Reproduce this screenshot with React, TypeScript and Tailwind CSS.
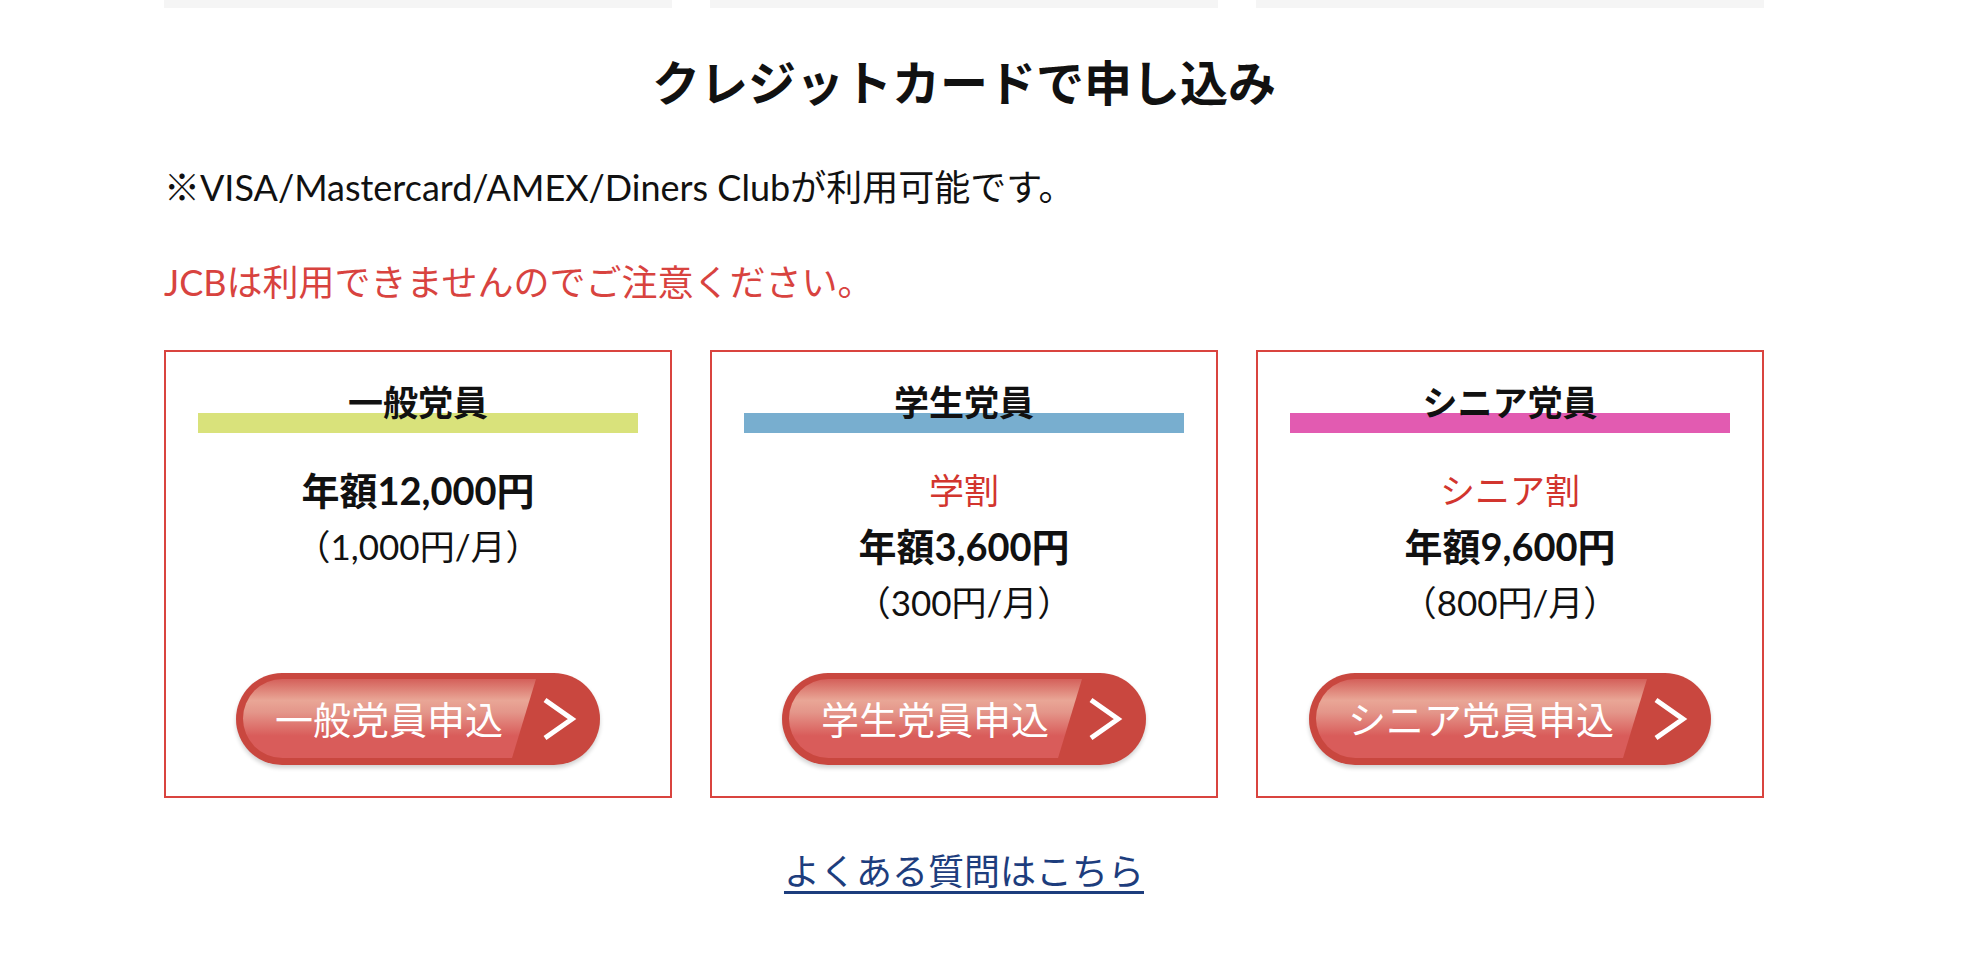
import React from "react";

type Plan = {
  title: string;
  bar: string;
  discount?: string;
  price: string;
  monthly: string;
  button: string;
};

const plans: Plan[] = [
  {
    title: "一般党員",
    bar: "bg-[linear-gradient(to_bottom,transparent_28px,#d9e27b_28px)]",
    price: "年額12,000円",
    monthly: "（1,000円/月）",
    button: "一般党員申込",
  },
  {
    title: "学生党員",
    bar: "bg-[linear-gradient(to_bottom,transparent_28px,#78aecf_28px)]",
    discount: "学割",
    price: "年額3,600円",
    monthly: "（300円/月）",
    button: "学生党員申込",
  },
  {
    title: "シニア党員",
    bar: "bg-[linear-gradient(to_bottom,transparent_28px,#e25bb1_28px)]",
    discount: "シニア割",
    price: "年額9,600円",
    monthly: "（800円/月）",
    button: "シニア党員申込",
  },
];

function ApplyButton({ label }: { label: string }) {
  return (
    <a
      href="#"
      className="inline-flex h-[92px] rounded-full bg-[#c9473f] px-[7px] pt-[6px] pb-[7px] shadow-[0_3px_4px_rgba(0,0,0,0.18)]"
    >
      <span className="flex h-full items-center rounded-l-full bg-[linear-gradient(to_bottom,#d4605a_0%,#e9a696_27%,#e4968a_42%,#d95c5a_72%,#d95c5a_100%)] pl-[32px] pr-[33px] text-[38px] leading-none text-white [clip-path:polygon(0_0,100%_0,calc(100%-24px)_100%,0_100%)]">
        {label}
      </span>
      <span className="flex h-full w-[57px] items-center">
        <svg width="36" height="50" viewBox="0 0 36 50" className="ml-[5px]">
          <polyline points="4,6 31,25 4,44" fill="none" stroke="#ffffff" strokeWidth="5" />
        </svg>
      </span>
    </a>
  );
}

function PlanCard({ plan }: { plan: Plan }) {
  return (
    <div className="flex h-[448px] flex-col items-center border-2 border-[#d9443f] bg-white">
      <div className={`mt-[33px] h-[48px] w-[440px] text-center ${plan.bar}`}>
        <span className="block text-[35px] font-bold leading-[34px] text-[#111]">{plan.title}</span>
      </div>
      <div className="mt-[29px] flex flex-col items-center text-center">
        {plan.discount && (
          <p className="text-[35px] leading-[56px] text-[#d2352e]">{plan.discount}</p>
        )}
        <p className="text-[38px] font-bold leading-[56px] text-[#111]">{plan.price}</p>
        <p className="text-[35px] leading-[56px] text-[#111]">{plan.monthly}</p>
      </div>
      <div className="mt-auto mb-[31px]">
        <ApplyButton label={plan.button} />
      </div>
    </div>
  );
}

export default function App() {
  return (
    <div
      className="min-h-[978px] bg-white"
      style={{ fontFamily: '"Lato", "Noto Sans CJK JP", sans-serif' }}
    >
      <div className="ml-[164px] w-[1600px]">
        <div className="grid grid-cols-3 gap-[38px]">
          <div className="h-[8px] bg-[#f5f5f5]" />
          <div className="h-[8px] bg-[#f5f5f5]" />
          <div className="h-[8px] bg-[#f5f5f5]" />
        </div>
        <h2 className="mt-[36px] text-center text-[48px] font-bold leading-[72px] text-[#111]" style={{ fontFamily: '"Noto Sans CJK JP", sans-serif' }}>
          クレジットカードで申し込み
        </h2>
        <p className="mt-[45px] text-[36px] leading-[52px] text-[#111]">
          ※VISA/Mastercard/AMEX/Diners Clubが利用可能です。
        </p>
        <p className="mt-[43px] text-[36px] leading-[52px] text-[#d8433f]">
          JCBは利用できませんのでご注意ください。
        </p>
        <div className="mt-[42px] grid grid-cols-3 gap-[38px]">
          {plans.map((p) => (
            <PlanCard key={p.title} plan={p} />
          ))}
        </div>
        <div className="mt-[47px] text-center">
          <a
            href="#"
            className="text-[36px] leading-[52px] text-[#1d3d7d] underline decoration-[3px] underline-offset-[6px]"
          >
            よくある質問はこちら
          </a>
        </div>
      </div>
    </div>
  );
}
